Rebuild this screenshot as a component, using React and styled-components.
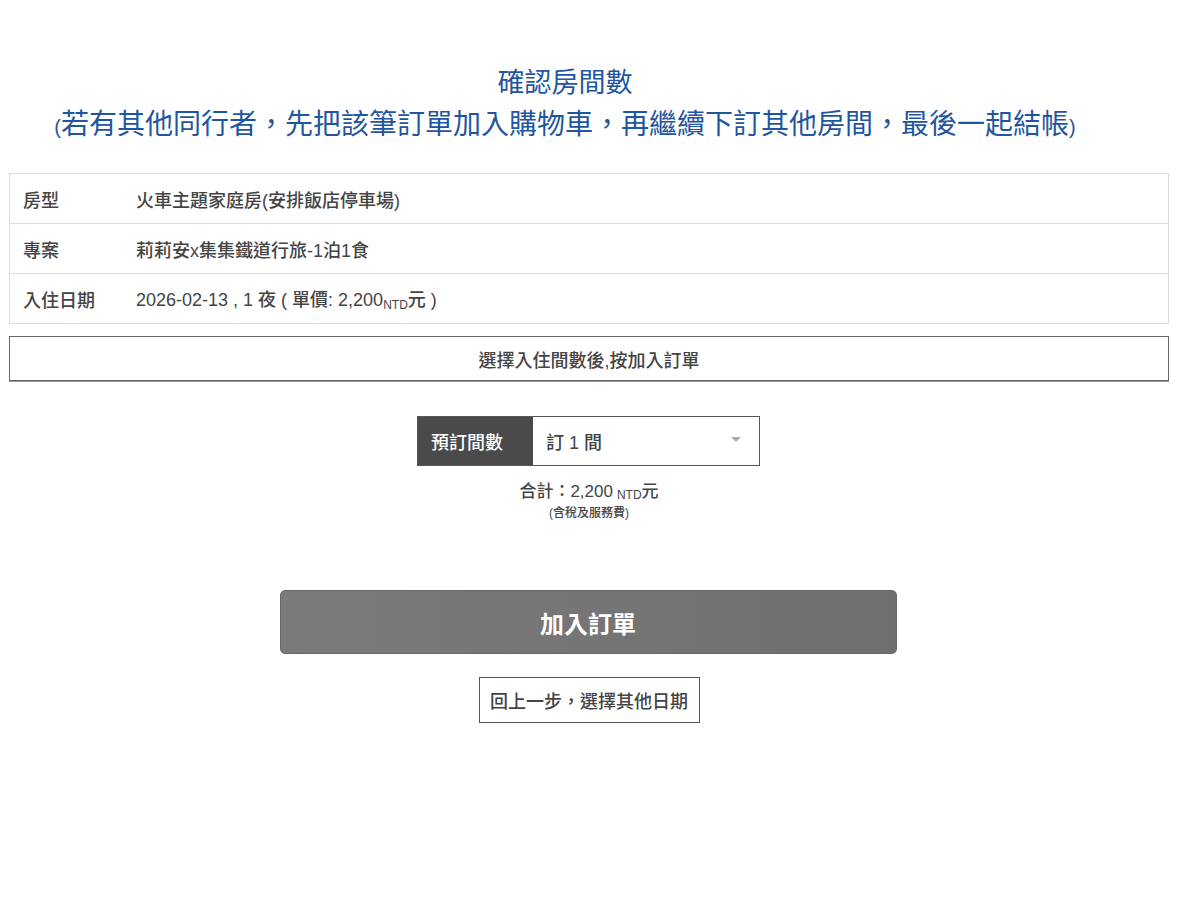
import React, { useState } from "react";
import styled, { createGlobalStyle } from "styled-components";

const GlobalStyle = createGlobalStyle`
  html, body {
    margin: 0;
    padding: 0;
    background: #fff;
  }
  body {
    font-family: "Liberation Sans", "Noto Sans CJK TC", sans-serif;
    color: #444;
  }
`;

const Page = styled.div`
  width: 1160px;
  margin: 0 0 0 9px;
  padding-top: 62px;
`;

// 標題
const Heading = styled.h2`
  margin: 0 48px 25px 0;
  text-align: center;
  font-size: 27px;
  font-weight: 400;
  line-height: 42px;
  color: #1f56a0;
`;

const HeadingNote = styled.span`
  font-size: 28px;
`;

const Paren = styled.span`
  font-size: 20px;
`;

// 房型資訊表
const InfoTable = styled.div`
  border: 1px solid #dcdcdc;
`;

const InfoRow = styled.div`
  display: flex;
  align-items: center;
  height: 49px;
  padding-left: 13px;
  font-size: 18px;
  font-weight: 500;
  color: #444;
  & + & {
    border-top: 1px solid #dcdcdc;
  }
`;

const InfoLabel = styled.div`
  width: 113px;
  flex-shrink: 0;
`;

const InfoValue = styled.div``;

const Sub = styled.sub`
  font-size: 12px;
  vertical-align: -3px;
`;

const Notice = styled.div`
  margin-top: 12px;
  height: 43px;
  border: 1px solid #666;
  box-shadow: 0 1px 0 #999;
  display: flex;
  align-items: center;
  justify-content: center;
  font-size: 18px;
  font-weight: 500;
  color: #444;
`;

// 選擇間數
const PickerArea = styled.div`
  display: flex;
  flex-direction: column;
  align-items: center;
  margin-top: 35px;
`;

const Picker = styled.div`
  display: flex;
  height: 48px;
  margin-left: -1px;
  border: 1px solid #555;
`;

const PickerLabel = styled.div`
  width: 115px;
  box-sizing: border-box;
  padding-left: 13px;
  background: #4a4a4a;
  color: #fff;
  font-size: 18px;
  font-weight: 500;
  display: flex;
  align-items: center;
`;

const Select = styled.div`
  position: relative;
  width: 226px;
  display: flex;
  align-items: center;
  padding-left: 13px;
  box-sizing: border-box;
  font-size: 18px;
  font-weight: 500;
  color: #444;
  cursor: pointer;
`;

const Arrow = styled.span`
  position: absolute;
  right: 18px;
  top: 20px;
  width: 0;
  height: 0;
  border-left: 5px solid transparent;
  border-right: 5px solid transparent;
  border-top: 5px solid #aaa;
`;

const Total = styled.div`
  margin-top: 16px;
  font-size: 17px;
  font-weight: 500;
  color: #444;
  line-height: 20px;
`;

const TotalSub = styled.sub`
  font-size: 12px;
  vertical-align: -2px;
  margin-left: 4px;
`;

const TaxNote = styled.div`
  font-size: 12px;
  font-weight: 500;
  color: #444;
  line-height: 14px;
  margin-top: 1px;
`;

// 按鈕
const Actions = styled.div`
  display: flex;
  flex-direction: column;
  align-items: center;
  margin-top: 70px;
`;

const AddButton = styled.button`
  width: 617px;
  height: 64px;
  margin-left: -2px;
  border: 1px solid #666;
  border-radius: 5px;
  background: linear-gradient(90deg, #7b7b7b, #6f6f6f);
  color: #fff;
  font-family: inherit;
  font-size: 24px;
  font-weight: 700;
  cursor: pointer;
`;

const BackButton = styled.button`
  margin-top: 23px;
  width: 221px;
  height: 46px;
  border: 1px solid #555;
  background: #fff;
  color: #444;
  font-family: inherit;
  font-size: 18px;
  font-weight: 500;
  cursor: pointer;
`;

const rows = [
  { label: "房型", value: "火車主題家庭房(安排飯店停車場)" },
  { label: "專案", value: "莉莉安x集集鐵道行旅-1泊1食" },
];

export default function App() {
  const [rooms] = useState(1);

  return (
    <>
      <GlobalStyle />
      <Page>
        <Heading>
          確認房間數
          <br />
          <HeadingNote>
            <Paren>(</Paren>若有其他同行者，先把該筆訂單加入購物車，再繼續下訂其他房間，最後一起結帳<Paren>)</Paren>
          </HeadingNote>
        </Heading>

        <InfoTable>
          {rows.map((r) => (
            <InfoRow key={r.label}>
              <InfoLabel>{r.label}</InfoLabel>
              <InfoValue>{r.value}</InfoValue>
            </InfoRow>
          ))}
          <InfoRow>
            <InfoLabel>入住日期</InfoLabel>
            <InfoValue>
              2026-02-13 , 1 夜 ( 單價: 2,200<Sub>NTD</Sub>元 )
            </InfoValue>
          </InfoRow>
        </InfoTable>

        <Notice>選擇入住間數後,按加入訂單</Notice>

        <PickerArea>
          <Picker>
            <PickerLabel>預訂間數</PickerLabel>
            <Select>
              訂 {rooms} 間
              <Arrow />
            </Select>
          </Picker>
          <Total>
            合計：2,200<TotalSub>NTD</TotalSub>元
          </Total>
          <TaxNote>(含稅及服務費)</TaxNote>
        </PickerArea>

        <Actions>
          <AddButton>加入訂單</AddButton>
          <BackButton>回上一步，選擇其他日期</BackButton>
        </Actions>
      </Page>
    </>
  );
}
